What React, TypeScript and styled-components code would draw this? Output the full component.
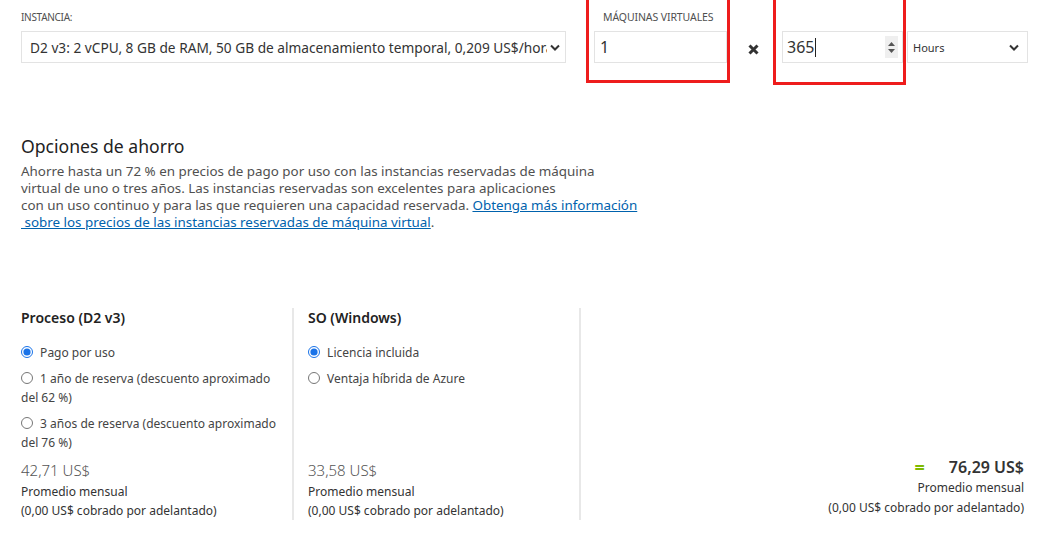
import React from "react";
import styled, { createGlobalStyle } from "styled-components";

const Global = createGlobalStyle`
  html, body { margin: 0; padding: 0; background: #fff; }
  body { font-family: "Segoe UI", "Noto Sans", "Open Sans", sans-serif; color: #333; }
  * { box-sizing: border-box; }
`;

const Page = styled.div`
  width: 1045px;
  height: 548px;
  overflow: hidden;
  padding-left: 21px;
`;

const TopRow = styled.div`
  display: flex;
  align-items: flex-start;
`;

const Field = styled.div<{ $w: number }>`
  width: ${(p) => p.$w}px;
  display: flex;
  flex-direction: column;
`;

const FieldLabel = styled.div`
  font-size: 10px;
  line-height: 14px;
  height: 31px;
  padding-top: 10px;
  color: #505050;
  text-transform: uppercase;
  letter-spacing: -0.3px;
`;

const SelectBox = styled.div<{ $w: number; $pl: number; $pr: number; $ml?: number }>`
  width: ${(p) => p.$w}px;
  margin-left: ${(p) => p.$ml ?? 0}px;
  height: 32px;
  border: 1px solid #e3e3e3;
  display: flex;
  align-items: center;
  padding: 0 ${(p) => p.$pr}px 0 ${(p) => p.$pl}px;
  color: #333;
  background: #fff;
`;

const SelectText = styled.span<{ $small?: boolean }>`
  flex: 1;
  white-space: nowrap;
  overflow: hidden;
  font-size: ${(p) => (p.$small ? "11px" : "13.7px")};
  margin-right: ${(p) => (p.$small ? "0" : "3px")};
`;

const Annotated = styled.div<{ $w: number; $ml: number; $h: number; $pl: number }>`
  width: ${(p) => p.$w}px;
  height: ${(p) => p.$h}px;
  margin-left: ${(p) => p.$ml}px;
  border: 3px solid #ee1c1c;
  border-top: none;
  padding-left: ${(p) => p.$pl}px;
  display: flex;
  flex-direction: column;
`;

const CenteredLabel = styled(FieldLabel)`
  padding-left: 9px;
  font-size: 10.5px;
  letter-spacing: -0.1px;
`;

const InputBox = styled.div<{ $pl: number }>`
  height: 32px;
  border: 1px solid #e3e3e3;
  display: flex;
  align-items: center;
  padding-left: ${(p) => p.$pl}px;
  font-size: 16px;
  color: #333;
`;

const Caret = styled.span`
  display: inline-block;
  width: 1px;
  height: 19px;
  background: #222;
  margin-left: 1px;
`;

const Spinner = styled.div`
  margin-left: auto;
  margin-right: 4px;
  width: 13px;
  height: 22px;
  background: #efefef;
  display: flex;
  flex-direction: column;
  align-items: center;
  justify-content: center;
  gap: 3px;
`;

const Times = styled.div`
  width: 43px;
  height: 32px;
  margin-top: 33px;
  display: flex;
  align-items: center;
  justify-content: center;
  padding-left: 4px;
`;

const Section = styled.div`
  margin-top: 49px;
`;

const Heading = styled.h2`
  margin: 0;
  font-size: 17.6px;
  font-weight: 400;
  line-height: 24px;
  color: #222;
`;

const Paragraph = styled.p`
  margin: 5px 0 0;
  width: 680px;
  font-size: 13.4px;
  line-height: 17px;
  color: #505050;
`;

const Link = styled.a`
  color: #0062ad;
  text-decoration: underline;
`;

const Columns = styled.div`
  display: flex;
  margin-top: 77px;
  height: 212px;
`;

const Column = styled.div<{ $w: number; $pl: number; $border?: boolean }>`
  width: ${(p) => p.$w}px;
  padding-left: ${(p) => p.$pl}px;
  padding-right: 10px;
  border-right: ${(p) => (p.$border ? "2px solid #e8e8e8" : "none")};
  display: flex;
  flex-direction: column;
`;

const ColTitle = styled.div`
  font-size: 14px;
  font-weight: 600;
  line-height: 20px;
  color: #222;
  margin-bottom: 15px;
`;

const Option = styled.label`
  display: block;
  font-size: 12px;
  line-height: 19px;
  color: #444;
  margin-bottom: 7px;
`;

const Radio = styled.input.attrs({ type: "radio" })`
  margin: 0 4px 0 0;
  width: 12px;
  height: 12px;
  vertical-align: -1px;
  accent-color: #1a73e8;
`;

const Price = styled.div`
  margin-top: auto;
  font-size: 15px;
  line-height: 20px;
  color: #555;
  font-weight: 300;
  margin-bottom: 2px;
`;

const Small = styled.div`
  font-size: 12px;
  line-height: 19px;
  color: #333;
`;

const TotalCol = styled.div`
  flex: 1;
  padding-right: 21px;
  display: flex;
  flex-direction: column;
  align-items: flex-end;
  justify-content: flex-end;
  padding-bottom: 2px;
`;

const TotalRow = styled.div`
  display: flex;
  align-items: center;
  gap: 24px;
  font-size: 16px;
  font-weight: 600;
  color: #333;
  line-height: 22px;
`;

const TotalSmall = styled(Small)`
  line-height: 20px;
`;

const Equals = styled.span`
  color: #7fba00;
  font-weight: 700;
  font-size: 18px;
`;

const Chevron = () => (
  <svg width="10" height="7" viewBox="0 0 10 7">
    <path d="M1 1.5 L5 5.5 L9 1.5" stroke="#333" strokeWidth="2" fill="none" />
  </svg>
);

const Tri = ({ up }: { up?: boolean }) => (
  <svg width="7" height="4" viewBox="0 0 7 4">
    <path d={up ? "M0 4 L3.5 0 L7 4 Z" : "M0 0 L3.5 4 L7 0 Z"} fill="#555" />
  </svg>
);

export default function App() {
  return (
    <Page>
      <Global />
      <TopRow>
        <Field $w={545}>
          <FieldLabel>Instancia:</FieldLabel>
          <SelectBox $w={545} $pl={8} $pr={5}>
            <SelectText>
              D2 v3: 2 vCPU, 8 GB de RAM, 50 GB de almacenamiento temporal, 0,209 US$/hora
            </SelectText>
            <Chevron />
          </SelectBox>
        </Field>
        <Annotated $w={144} $ml={20} $h={83} $pl={5}>
          <CenteredLabel>Máquinas virtuales</CenteredLabel>
          <InputBox $pl={5}>1</InputBox>
        </Annotated>
        <Times>
          <svg width="11" height="11" viewBox="0 0 11 11">
            <path d="M1.5 1.5 L9.5 9.5 M9.5 1.5 L1.5 9.5" stroke="#333" strokeWidth="3" />
          </svg>
        </Times>
        <Annotated $w={133} $ml={0} $h={85} $pl={6}>
          <FieldLabel />
          <InputBox $pl={4}>
            365
            <Caret />
            <Spinner>
              <Tri up />
              <Tri />
            </Spinner>
          </InputBox>
        </Annotated>
        <Field $w={122}>
          <FieldLabel />
          <SelectBox $w={121} $pl={5} $pr={8} $ml={1}>
            <SelectText $small>Hours</SelectText>
            <Chevron />
          </SelectBox>
        </Field>
      </TopRow>

      <Section>
        <Heading>Opciones de ahorro</Heading>
        <Paragraph>
          Ahorre hasta un 72 % en precios de pago por uso con las instancias reservadas de máquina
          <br />
          virtual de uno o tres años. Las instancias reservadas son excelentes para aplicaciones
          <br />
          con un uso continuo y para las que requieren una capacidad reservada.{" "}
          <Link href="#">
            Obtenga más información
            <br />
            {"\u00a0sobre los precios de las instancias reservadas de máquina virtual"}
          </Link>
          .
        </Paragraph>
      </Section>

      <Columns>
        <Column $w={273} $pl={0} $border>
          <ColTitle>Proceso (D2 v3)</ColTitle>
          <Option>
            <Radio name="p" defaultChecked /> Pago por uso
          </Option>
          <Option>
            <Radio name="p" /> 1 año de reserva (descuento aproximado del 62 %)
          </Option>
          <Option>
            <Radio name="p" /> 3 años de reserva (descuento aproximado del 76 %)
          </Option>
          <Price>42,71 US$</Price>
          <Small>Promedio mensual</Small>
          <Small>(0,00 US$ cobrado por adelantado)</Small>
        </Column>
        <Column $w={287} $pl={14} $border>
          <ColTitle>SO (Windows)</ColTitle>
          <Option>
            <Radio name="s" defaultChecked /> Licencia incluida
          </Option>
          <Option>
            <Radio name="s" /> Ventaja híbrida de Azure
          </Option>
          <Price>33,58 US$</Price>
          <Small>Promedio mensual</Small>
          <Small>(0,00 US$ cobrado por adelantado)</Small>
        </Column>
        <TotalCol>
          <TotalRow>
            <Equals>=</Equals>
            <span>76,29 US$</span>
          </TotalRow>
          <TotalSmall>Promedio mensual</TotalSmall>
          <TotalSmall>(0,00 US$ cobrado por adelantado)</TotalSmall>
        </TotalCol>
      </Columns>
    </Page>
  );
}
